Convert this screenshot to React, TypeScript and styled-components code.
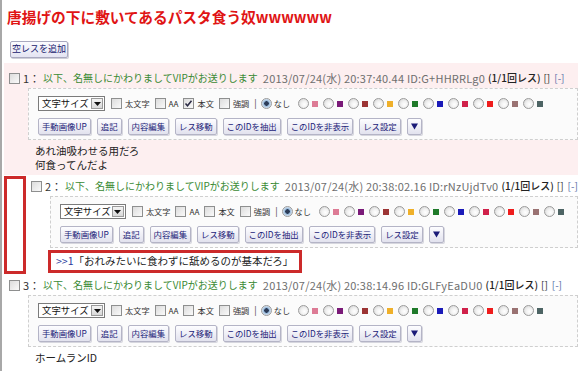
import styled, { createGlobalStyle } from 'styled-components';

const GlobalStyle = createGlobalStyle`
  html, body {
    margin: 0;
    padding: 0;
    background: #ffffff;
  }
  body {
    font-family: "Noto Sans CJK JP", "Liberation Sans", sans-serif;
    font-size: 10px;
    line-height: 1.2;
    color: #222;
  }
`;

const COLORS = [
  '#dd7b95',
  '#7a1a78',
  '#9c3434',
  '#efb02a',
  '#1f7a2a',
  '#1a1ab8',
  '#d0214a',
  '#ee1c1c',
  '#9a7272',
  '#4d6464',
];

const BUTTONS = ['手動画像UP', '追記', '内容編集', 'レス移動', 'このIDを抽出', 'このIDを非表示', 'レス設定'];

type PostData = {
  no: number;
  time: string;
  id: string;
  body: string[];
  honbun: boolean;
  highlight?: boolean;
  marked?: boolean;
  quote?: string;
};

const posts: PostData[] = [
  {
    no: 1,
    time: '2013/07/24(水) 20:37:40.44',
    id: 'G+HHRRLg0',
    body: ['あれ油吸わせる用だろ', '何食ってんだよ'],
    honbun: true,
    highlight: true,
  },
  {
    no: 2,
    time: '2013/07/24(水) 20:38:02.16',
    id: 'rNzUjdTv0',
    body: [],
    honbun: false,
    marked: true,
    quote: '「おれみたいに食わずに舐めるのが基本だろ」',
  },
  {
    no: 3,
    time: '2013/07/24(水) 20:38:14.96',
    id: 'GLFyEaDU0',
    body: ['ホームランID'],
    honbun: false,
  },
];

function CheckBox({ checked }: { checked?: boolean }) {
  return (
    <Check>
      {checked && (
        <svg width="9" height="9" viewBox="0 0 9 9">
          <polyline points="1.5,4.5 3.5,6.8 7.5,1.8" fill="none" stroke="#2a2a44" strokeWidth="1.5" />
        </svg>
      )}
    </Check>
  );
}

function Toolbar({ honbun }: { honbun: boolean }) {
  return (
    <ToolBox>
      <ToolRow>
        <Select>
          <SelectText>文字サイズ</SelectText>
          <SelectArrow>
            <svg width="7" height="4" viewBox="0 0 7 4">
              <polygon points="0,0 7,0 3.5,4" fill="#111" />
            </svg>
          </SelectArrow>
        </Select>
        <CheckBox />
        <OptLabel>太文字</OptLabel>
        <CheckBox />
        <OptLabel>AA</OptLabel>
        <CheckBox checked={honbun} />
        <OptLabel>本文</OptLabel>
        <CheckBox />
        <OptLabel>強調</OptLabel>
        <Bar>|</Bar>
        <Radio $checked />
        <OptLabel $wide>なし</OptLabel>
        {COLORS.map((c) => (
          <ColorOpt key={c}>
            <Radio />
            <Swatch $color={c} />
          </ColorOpt>
        ))}
      </ToolRow>
      <ToolRow $buttons>
        {BUTTONS.map((b) => (
          <SmallButton key={b}>{b}</SmallButton>
        ))}
        <SmallButton>
          <svg width="7" height="7" viewBox="0 0 7 7">
            <polygon points="0,0.5 7,0.5 3.5,6.5" fill="#1b1b78" />
          </svg>
        </SmallButton>
      </ToolRow>
    </ToolBox>
  );
}

function Post({ post }: { post: PostData }) {
  return (
    <PostBox $highlight={post.highlight}>
      <Header>
        <CheckBox />
        <ResNo>{post.no}：</ResNo>
        <Name>以下、名無しにかわりましてVIPがお送りします</Name>
        <DateText>
          {post.time} ID:{post.id}
        </DateText>
        <Count>(1/1回レス)</Count>
        <Dark>[]</Dark>
        <Link>[-]</Link>
      </Header>
      <Toolbar honbun={post.honbun} />
      {post.quote && (
        <Quote>
          <Anchor>&gt;&gt;1</Anchor>
          {post.quote}
        </Quote>
      )}
      {post.body.length > 0 && (
        <Body>
          {post.body.map((line) => (
            <div key={line}>{line}</div>
          ))}
        </Body>
      )}
    </PostBox>
  );
}

export default function App() {
  return (
    <>
      <GlobalStyle />
      <Page>
        <Title>唐揚げの下に敷いてあるパスタ食う奴wwwwww</Title>
        <AddButton>空レスを追加</AddButton>
        {posts.map((p) =>
          p.marked ? (
            <MarkedRow key={p.no}>
              <Marker />
              <Post post={p} />
            </MarkedRow>
          ) : (
            <Post key={p.no} post={p} />
          ),
        )}
      </Page>
    </>
  );
}

const Page = styled.div`
  width: 580px;
  height: 371px;
  box-sizing: border-box;
  border-left: 2px solid #a8a8a8;
  padding: 7px 2px 0 2px;
  overflow: hidden;
`;

const Title = styled.h1`
  margin: 0 0 0 3px;
  font-size: 14.7px;
  line-height: 20px;
  font-weight: 700;
  color: #e01414;
`;

const AddButton = styled.div`
  display: flex;
  align-items: center;
  justify-content: center;
  margin: 14px 0 5px 6px;
  width: 58px;
  height: 17px;
  box-sizing: border-box;
  border: 1px solid #a9a9c0;
  border-radius: 2px;
  background: linear-gradient(#fbfbff, #e4e4f2);
  box-shadow: 1px 1px 0 #cfcfd8;
  color: #18186e;
  font-size: 9px;
  white-space: nowrap;
`;

const MarkedRow = styled.div`
  display: flex;
  align-items: flex-start;
`;

const Marker = styled.div`
  width: 22px;
  height: 98px;
  box-sizing: border-box;
  border: 3px solid #cc2a2a;
  margin-top: 1px;
  flex-shrink: 0;
`;

const PostBox = styled.div<{ $highlight?: boolean }>`
  flex: 1;
  min-width: 0;
  background: ${({ $highlight }) => ($highlight ? '#fdeff0' : 'transparent')};
  padding: ${({ $highlight }) => ($highlight ? '7px 0 4px' : '3px 0 0')};
`;

const Header = styled.div`
  display: flex;
  align-items: center;
  height: 16px;
  padding-left: 5px;
  white-space: nowrap;
  font-size: 11px;
  line-height: 16px;
`;

const Check = styled.span`
  display: inline-flex;
  align-items: center;
  justify-content: center;
  width: 11px;
  height: 11px;
  box-sizing: border-box;
  border: 1px solid #8e8f8f;
  background: linear-gradient(135deg, #dcdcdc, #fafafa);
  flex-shrink: 0;
  margin-right: 3px;
`;

const ResNo = styled.span`
  color: #333;
  margin-right: 3px;
`;

const Name = styled.span`
  color: #3a8a34;
  font-size: 10px;
  margin-right: 5px;
`;

const DateText = styled.span`
  color: #6e6e6e;
  margin-right: 3px;
  letter-spacing: 0.2px;
`;

const Count = styled.span`
  color: #222;
  font-size: 10px;
  font-weight: 500;
  margin-right: 3px;
`;

const Dark = styled.span`
  color: #333;
  font-size: 10px;
  margin-right: 4px;
`;

const Link = styled.span`
  color: #5a70a8;
  font-size: 10px;
`;

const ToolBox = styled.div`
  margin: 2px 0 0 24px;
  border: 1px dashed #cfcfcf;
  background: #fbfbfb;
  padding: 6px 8px 4px 9px;
  display: flex;
  flex-direction: column;
  gap: 6px;
`;

const ToolRow = styled.div<{ $buttons?: boolean }>`
  display: flex;
  align-items: center;
  height: 17px;
  line-height: 17px;
  white-space: nowrap;
  gap: ${({ $buttons }) => ($buttons ? '6px' : '0')};
`;

const Select = styled.div`
  display: flex;
  align-items: center;
  justify-content: space-between;
  width: 67px;
  height: 15px;
  box-sizing: border-box;
  border: 1px solid #7b7b7b;
  background: #fff;
  padding: 0 1px 0 3px;
  margin-right: 6px;
`;

const SelectText = styled.span`
  font-size: 9.4px;
  line-height: 13px;
  color: #111;
`;

const SelectArrow = styled.span`
  display: flex;
  align-items: center;
  justify-content: center;
  width: 12px;
  height: 11px;
  box-sizing: border-box;
  border: 1px solid #9a9a9a;
  background: linear-gradient(#f4f4f4, #d8d8d8);
`;

const OptLabel = styled.span<{ $wide?: boolean }>`
  color: #333;
  font-size: 8.2px;
  margin-right: ${({ $wide }) => ($wide ? '8px' : '5px')};
`;

const Bar = styled.span`
  color: #444;
  font-size: 9px;
  margin-right: 4px;
`;

const Radio = styled.span<{ $checked?: boolean }>`
  display: inline-block;
  width: 11px;
  height: 11px;
  box-sizing: border-box;
  border-radius: 50%;
  border: 1px solid #9b9b9b;
  background: ${({ $checked }) =>
    $checked
      ? 'radial-gradient(circle, #2c3c58 0 2px, #8fb4d8 2.5px, #e8eef6 5px)'
      : 'radial-gradient(circle at 60% 60%, #ffffff 0, #f2f2f2 40%, #cfcfcf 100%)'};
  flex-shrink: 0;
  margin-right: 2px;
`;

const ColorOpt = styled.span`
  display: inline-flex;
  align-items: center;
  gap: 1px;
  margin-right: 5px;
`;

const Swatch = styled.span<{ $color: string }>`
  display: inline-block;
  width: 6px;
  height: 6px;
  background: ${({ $color }) => $color};
`;

const SmallButton = styled.span`
  display: inline-flex;
  align-items: center;
  justify-content: center;
  height: 17px;
  box-sizing: border-box;
  padding: 0 3px;
  border: 1px solid #b4b4c6;
  border-radius: 2px;
  background: linear-gradient(#fdfdff, #e2e2ee);
  box-shadow: 1px 1px 0 #d6d6de;
  color: #1b1b78;
  font-size: 8.4px;
`;

const Quote = styled.div`
  display: flex;
  align-items: center;
  width: fit-content;
  margin: 2px 0 0 22px;
  border: 3px solid #cc2a2a;
  padding: 0 6px 0 5px;
  height: 23px;
  box-sizing: border-box;
  font-size: 10.5px;
  color: #222;
  white-space: nowrap;
`;

const Anchor = styled.span`
  color: #2a3a9c;
`;

const Body = styled.div`
  margin: 4px 0 0 31px;
  font-size: 10.5px;
  line-height: 13.5px;
  color: #222;
`;
